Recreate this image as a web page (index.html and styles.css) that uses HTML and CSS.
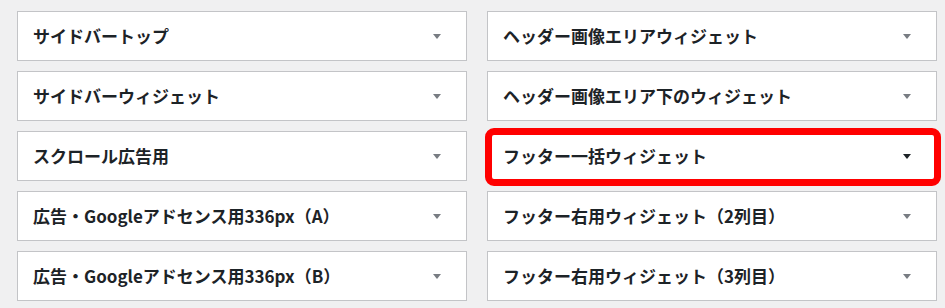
FILE: index.html
```html
<!DOCTYPE html>
<html lang="ja">
<head>
<meta charset="utf-8">
<title>Widgets</title>
<link rel="stylesheet" href="styles.css">
</head>
<body>
<div class="areas">
  <div class="widget"><h3 class="title">サイドバートップ</h3><span class="toggle"></span></div>
  <div class="widget"><h3 class="title">ヘッダー画像エリアウィジェット</h3><span class="toggle"></span></div>
  <div class="widget"><h3 class="title">サイドバーウィジェット</h3><span class="toggle"></span></div>
  <div class="widget"><h3 class="title">ヘッダー画像エリア下のウィジェット</h3><span class="toggle"></span></div>
  <div class="widget"><h3 class="title">スクロール広告用</h3><span class="toggle"></span></div>
  <div class="widget active"><h3 class="title">フッター一括ウィジェット</h3><span class="toggle"></span><span class="mark"></span></div>
  <div class="widget"><h3 class="title">広告・Googleアドセンス用336px（A）</h3><span class="toggle"></span></div>
  <div class="widget"><h3 class="title">フッター右用ウィジェット（2列目）</h3><span class="toggle"></span></div>
  <div class="widget"><h3 class="title">広告・Googleアドセンス用336px（B）</h3><span class="toggle"></span></div>
  <div class="widget"><h3 class="title">フッター右用ウィジェット（3列目）</h3><span class="toggle"></span></div>
</div>
</body>
</html>
```
FILE: styles.css
```css
html, body {
  margin: 0;
  padding: 0;
  background: #f0f0f1;
}
body {
  font-family: "Noto Sans CJK JP", "Noto Sans", sans-serif;
  color: #1d2327;
}
.areas {
  display: grid;
  grid-template-columns: 450px 450px;
  column-gap: 20px;
  row-gap: 10px;
  padding: 11px 8px 0 17px;
}
.widget {
  position: relative;
  box-sizing: border-box;
  height: 50px;
  background: #fff;
  border: 1px solid #c3c4c7;
  display: flex;
  align-items: center;
  justify-content: space-between;
  padding: 0 25px 0 15px;
}
.title {
  margin: 0;
  font-size: 17px;
  font-weight: 700;
  line-height: 20px;
  white-space: nowrap;
}
.toggle {
  width: 0;
  height: 0;
  border-left: 4px solid transparent;
  border-right: 4px solid transparent;
  border-top: 5px solid #787c82;
  margin-top: 1px;
}
.active .toggle {
  border-top-color: #1d2327;
}
.mark {
  position: absolute;
  left: -3px;
  top: -4px;
  right: -5px;
  bottom: -6px;
  border: 7px solid #ff0000;
  border-radius: 9px;
  pointer-events: none;
}
```
